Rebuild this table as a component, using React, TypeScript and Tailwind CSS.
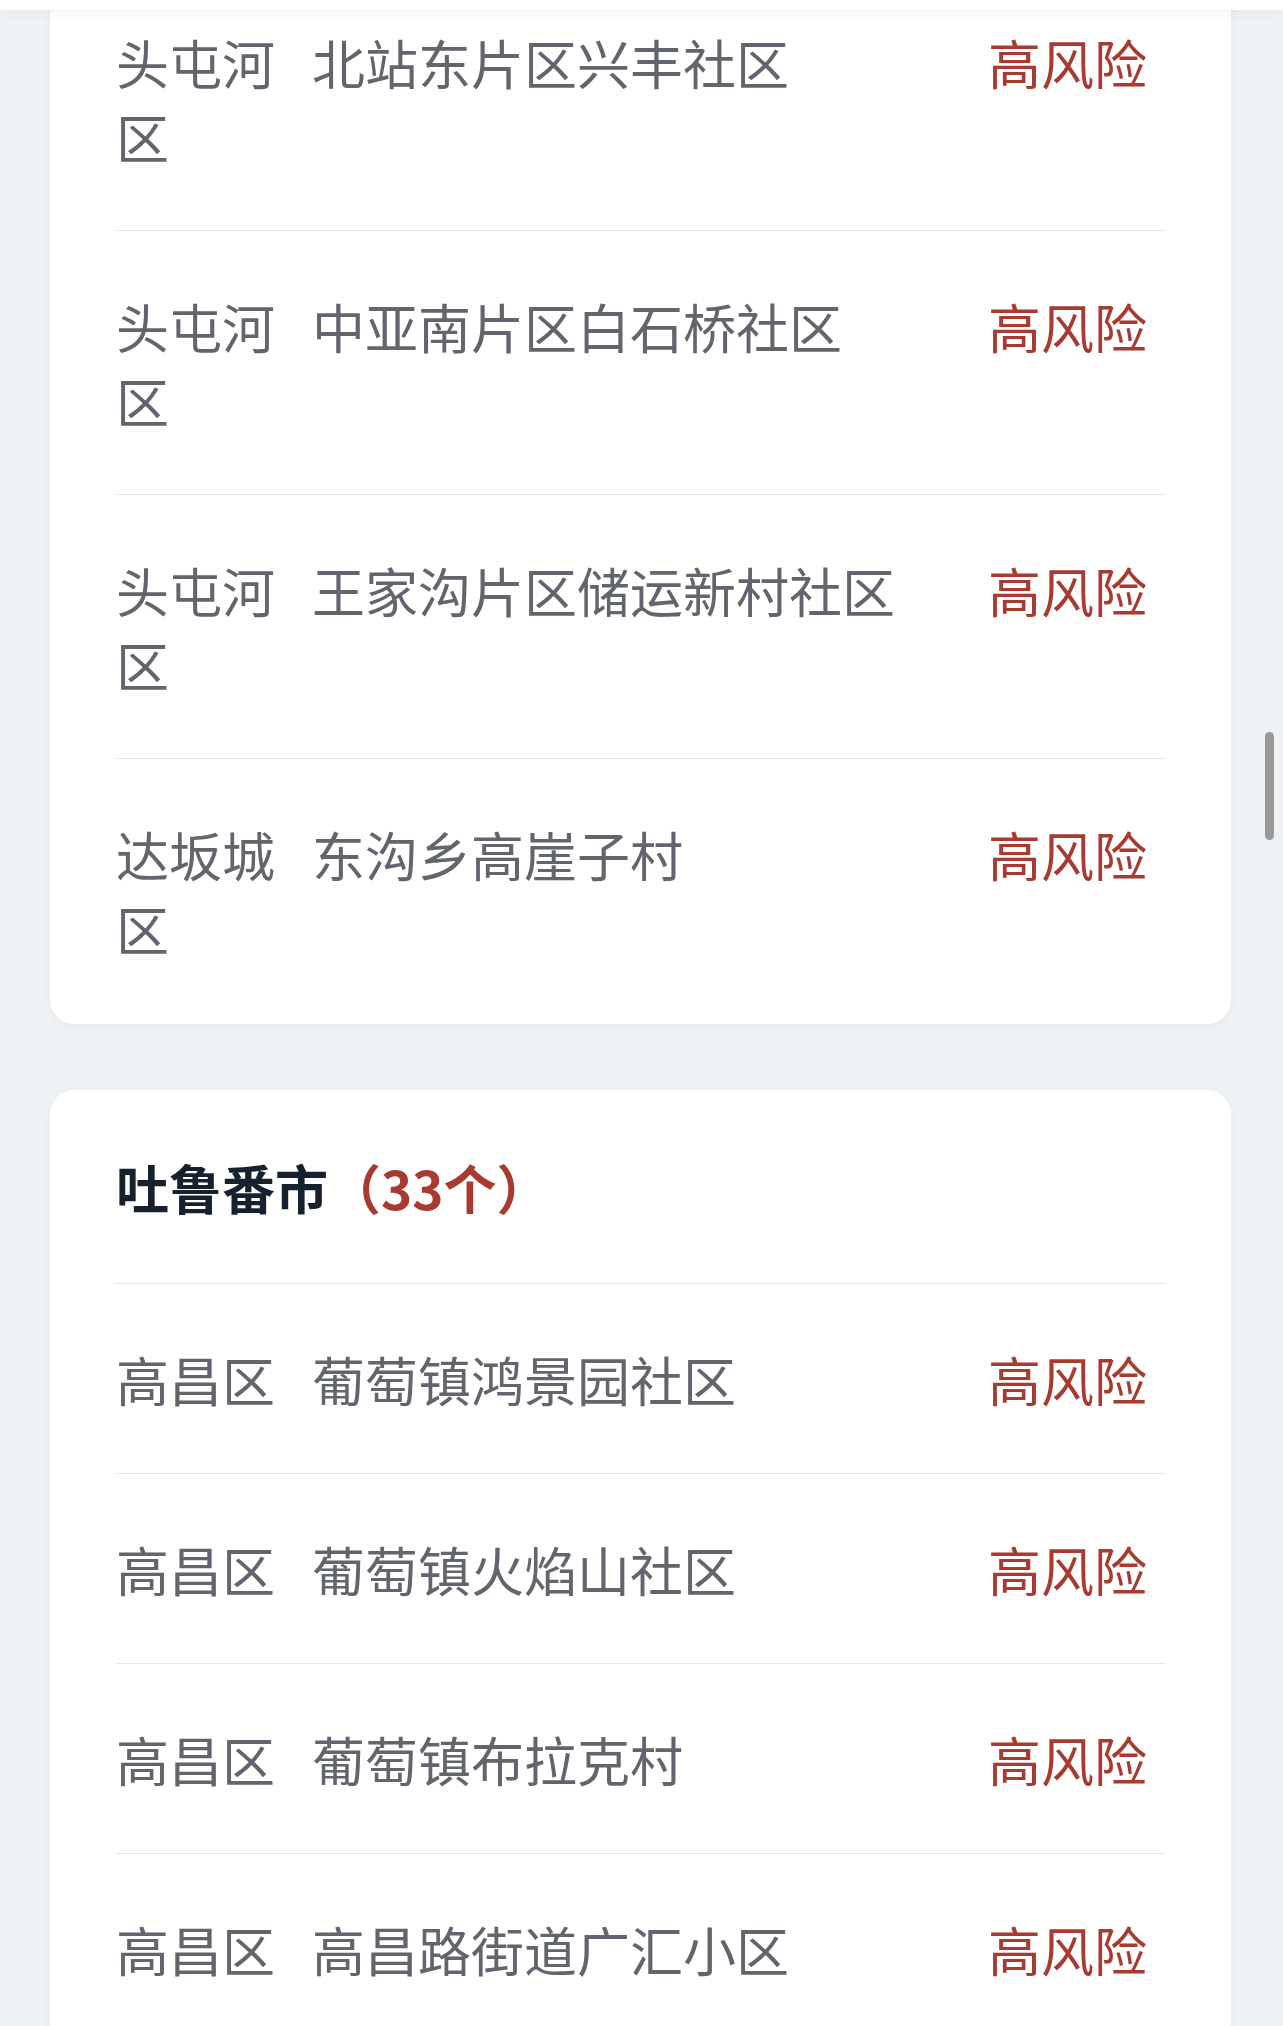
import React from 'react';

type Area = { district: string; name: string; level: string };

const FIRST: Area[] = [
  { district: '头屯河区', name: '北站东片区兴丰社区', level: '高风险' },
  { district: '头屯河区', name: '中亚南片区白石桥社区', level: '高风险' },
  { district: '头屯河区', name: '王家沟片区储运新村社区', level: '高风险' },
  { district: '达坂城区', name: '东沟乡高崖子村', level: '高风险' },
];

const TURPAN: Area[] = [
  { district: '高昌区', name: '葡萄镇鸿景园社区', level: '高风险' },
  { district: '高昌区', name: '葡萄镇火焰山社区', level: '高风险' },
  { district: '高昌区', name: '葡萄镇布拉克村', level: '高风险' },
  { district: '高昌区', name: '高昌路街道广汇小区', level: '高风险' },
];

function Row({ area, last }: { area: Area; last?: boolean }) {
  return (
    <div
      className={`flex items-start pt-[58px] pb-[57px] text-[53px] leading-[74px] ${
        last ? '' : 'border-b border-[#e6e6e6]'
      }`}
    >
      <div className="w-[162px] shrink-0 text-[#62646e]">{area.district}</div>
      <div className="ml-[34px] flex-1 text-[#62646e]">{area.name}</div>
      <div className="w-[177px] shrink-0 text-[#a83a2f]">{area.level}</div>
    </div>
  );
}

function Card({ title, count, areas }: { title?: string; count?: number; areas: Area[] }) {
  return (
    <div className="bg-white rounded-[24px] px-[66px] pb-[2px] shadow-[0_2px_10px_rgba(0,0,0,0.04)]">
      {title && (
        <div className="pt-[60px] pb-[59px] border-b border-[#e6e6e6] text-[53px] leading-[74px] font-bold text-[#17202e]">
          {title}
          <span className="text-[#a83a2f]">（{count}个）</span>
        </div>
      )}
      {areas.map((a, i) => (
        <Row key={i} area={a} last={!title && i === areas.length - 1} />
      ))}
    </div>
  );
}

export default function App() {
  return (
    <div
      className="relative min-h-screen bg-[#eef2f5] overflow-hidden"
      style={{ fontFamily: '"Noto Sans CJK SC", "Noto Sans", sans-serif' }}
    >
      <div className="fixed top-0 left-0 right-0 h-[10px] bg-white shadow-[0_2px_12px_rgba(0,0,0,0.06)] z-10" />
      <div className="pl-[50px] pr-[52px] pb-[40px] -mt-[33px] flex flex-col gap-[66px]">
        <Card areas={FIRST} />
        <Card title="吐鲁番市" count={33} areas={TURPAN} />
      </div>
      <div className="absolute left-[1265px] top-[732px] w-[9px] h-[108px] rounded-full bg-[#9a9a9a]" />
    </div>
  );
}
